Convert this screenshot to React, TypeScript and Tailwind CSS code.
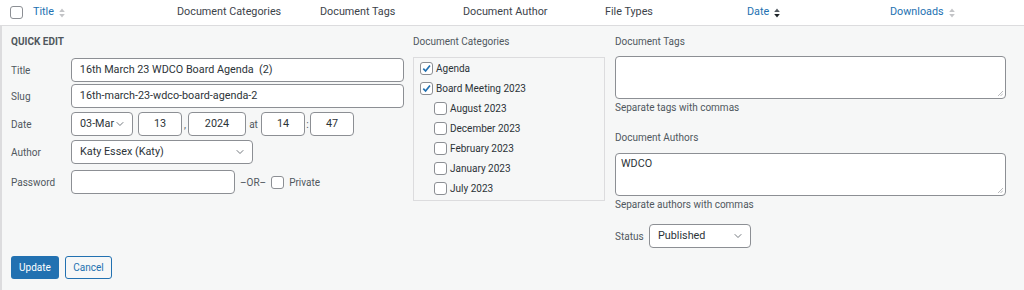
import { ChevronDown } from 'lucide-react'

const Sort = ({ active = false }: { active?: boolean }) => (
  <svg width="8" height="12" viewBox="0 0 8 12" className="ml-1 inline-block">
    <path d="M4 1.5 L6.8 5 H1.2 Z" fill={active ? '#50575e' : '#c3c4c7'} />
    <path d="M4 10.5 L6.8 7 H1.2 Z" fill={active ? '#1d2327' : '#c3c4c7'} />
  </svg>
)

const Check = ({ checked = false }: { checked?: boolean }) => (
  <span className="flex h-[13px] w-[13px] shrink-0 items-center justify-center rounded-[3px] border border-[#8c8f94] bg-white">
    {checked && (
      <svg width="11" height="11" viewBox="0 0 12 12">
        <path d="M2.5 6.2 L5 8.8 L9.8 2.8" fill="none" stroke="#2271b1" strokeWidth="1.8" />
      </svg>
    )}
  </span>
)

const Input = ({ value = '', className = '' }: { value?: string; className?: string }) => (
  <div
    className={`flex h-6 items-center whitespace-pre rounded-[4px] border border-[#8c8f94] bg-white px-2 text-[10.8px] text-[#2c3338] ${className}`}
  >
    {value}
  </div>
)

const Select = ({ value, className = '' }: { value: string; className?: string }) => (
  <div
    className={`flex h-6 items-center justify-between whitespace-nowrap rounded-[4px] border border-[#8c8f94] bg-white pl-2 pr-1.5 text-[10.8px] text-[#2c3338] ${className}`}
  >
    <span>{value}</span>
    <ChevronDown size={12} strokeWidth={1.6} className="text-[#50575e]" />
  </div>
)

const Row = ({ label, children }: { label: string; children: React.ReactNode }) => (
  <div className="flex items-center">
    <span className="w-[60px] text-[10px] text-[#50575e]">{label}</span>
    {children}
  </div>
)

const Textarea = ({ value = '' }: { value?: string }) => (
  <div className="relative h-[43px] rounded-[4px] border border-[#8c8f94] bg-white px-[5px] pt-[2px] text-[10.8px] leading-[15px] text-[#2c3338]">
    {value}
    <svg width="5" height="5" viewBox="0 0 5 5" className="absolute bottom-[2px] right-[2px]">
      <path d="M0 5 L5 0 M2.5 5 L5 2.5" stroke="#a7aaad" strokeWidth="0.8" />
    </svg>
  </div>
)

const Label = ({ children, className = '' }: { children: React.ReactNode; className?: string }) => (
  <div className={`text-[10px] leading-[15px] text-[#50575e] ${className}`}>{children}</div>
)

export default function App() {
  const cats = [
    { name: 'Agenda', checked: true, child: false },
    { name: 'Board Meeting 2023', checked: true, child: false },
    { name: 'August 2023', checked: false, child: true },
    { name: 'December 2023', checked: false, child: true },
    { name: 'February 2023', checked: false, child: true },
    { name: 'January 2023', checked: false, child: true },
    { name: 'July 2023', checked: false, child: true },
  ]

  return (
    <div className="h-[290px] w-[1024px] overflow-hidden bg-white font-['Roboto',sans-serif]">
      <div className="flex h-[26px] items-center border-b border-[#dcdcde] text-[10.8px] text-[#3c434a]">
        <div className="flex w-[33px] pl-[10px]">
          <span className="h-[13px] w-[13px] rounded-[3px] border border-[#8c8f94] bg-white" />
        </div>
        <div className="flex w-[144px] items-center text-[#2271b1]">
          Title
          <Sort />
        </div>
        <div className="w-[143px]">Document Categories</div>
        <div className="w-[143px]">Document Tags</div>
        <div className="w-[142px]">Document Author</div>
        <div className="w-[142px]">File Types</div>
        <div className="flex w-[143px] items-center text-[#2271b1]">
          Date
          <Sort active />
        </div>
        <div className="flex items-center text-[#2271b1]">
          Downloads
          <Sort />
        </div>
      </div>

      <div className="h-[264px] border-l-2 border-[#dcdcde] bg-[#f6f7f7] pl-[9px] pr-[18px] pt-[8px]">
        <div className="flex">
          <div className="w-[393px]">
            <div className="text-[10px] font-bold leading-[15px] text-[#50575e]">QUICK EDIT</div>
            <div className="mt-[9px] flex flex-col gap-[2px]">
              <Row label="Title">
                <Input value="16th March 23 WDCO Board Agenda  (2)" className="w-[334px]" />
              </Row>
              <Row label="Slug">
                <Input value="16th-march-23-wdco-board-agenda-2" className="w-[334px]" />
              </Row>
              <div className="mt-[2px]">
                <Row label="Date">
                  <Select value="03-Mar" className="w-[62px]" />
                  <Input value="13" className="ml-[5px] w-[44px] justify-center" />
                  <span className="w-[6px] text-center text-[10px] text-[#50575e]">,</span>
                  <Input value="2024" className="w-[58px] justify-center" />
                  <span className="w-[15px] text-center text-[10px] text-[#50575e]">at</span>
                  <Input value="14" className="w-[44px] justify-center" />
                  <span className="w-[5px] text-center text-[10px] text-[#50575e]">:</span>
                  <Input value="47" className="w-[44px] justify-center" />
                </Row>
              </div>
              <div className="mt-[2px]">
                <Row label="Author">
                  <Select value="Katy Essex (Katy)" className="w-[182px]" />
                </Row>
              </div>
              <div className="mt-[4px]">
                <Row label="Password">
                  <Input className="w-[164px]" />
                  <span className="ml-[5px] text-[10px] text-[#50575e]">–OR–</span>
                  <span className="ml-[5px]">
                    <Check />
                  </span>
                  <span className="ml-[5px] text-[10px] text-[#50575e]">Private</span>
                </Row>
              </div>
            </div>
            <div className="mt-[62px] flex gap-[6px]">
              <button className="h-[23px] w-[48px] rounded-[3px] bg-[#2271b1] text-[10px] text-white">
                Update
              </button>
              <button className="h-[23px] w-[47px] rounded-[3px] border border-[#2271b1] bg-[#f6f7f7] text-[10px] text-[#2271b1]">
                Cancel
              </button>
            </div>
          </div>

          <div className="ml-[9px] w-[192px]">
            <Label>Document Categories</Label>
            <div className="mt-[8px] h-[144px] border border-[#dcdcde] px-[6px]">
              {cats.map((c) => (
                <div
                  key={c.name}
                  className={`flex h-[20px] items-center gap-[3px] text-[10px] text-[#2c3338] ${c.child ? 'pl-[14px]' : ''}`}
                >
                  <Check checked={c.checked} />
                  <span>{c.name}</span>
                </div>
              ))}
            </div>
          </div>

          <div className="ml-[10px] flex-1">
            <Label>Document Tags</Label>
            <div className="mt-[7px]">
              <Textarea />
            </div>
            <Label className="mt-[1px]">Separate tags with commas</Label>
            <Label className="mt-[15px]">Document Authors</Label>
            <div className="mt-[8px]">
              <Textarea value="WDCO" />
            </div>
            <Label className="mt-[1px]">Separate authors with commas</Label>
            <div className="mt-[12px] flex items-center">
              <span className="w-[34px] text-[10px] text-[#50575e]">Status</span>
              <Select value="Published" className="w-[102px]" />
            </div>
          </div>
        </div>
      </div>
    </div>
  )
}
